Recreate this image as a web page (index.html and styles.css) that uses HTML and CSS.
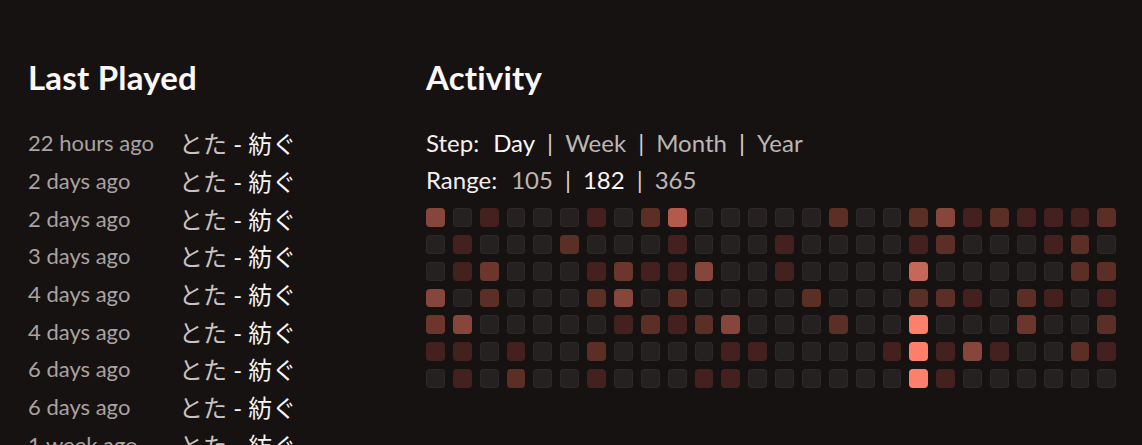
FILE: index.html
```html
<!DOCTYPE html>
<html lang="en">
<head>
<meta charset="utf-8">
<title>Stats</title>
<link rel="stylesheet" href="styles.css">
</head>
<body>
<main class="page">
  <section class="col-left">
    <h2 class="title">Last Played</h2>
    <ul class="plays">
      <li class="play"><span class="when">22 hours ago</span><span class="song"><span class="artist">とた</span> - 紡ぐ</span></li>
      <li class="play"><span class="when">2 days ago</span><span class="song"><span class="artist">とた</span> - 紡ぐ</span></li>
      <li class="play"><span class="when">2 days ago</span><span class="song"><span class="artist">とた</span> - 紡ぐ</span></li>
      <li class="play"><span class="when">3 days ago</span><span class="song"><span class="artist">とた</span> - 紡ぐ</span></li>
      <li class="play"><span class="when">4 days ago</span><span class="song"><span class="artist">とた</span> - 紡ぐ</span></li>
      <li class="play"><span class="when">4 days ago</span><span class="song"><span class="artist">とた</span> - 紡ぐ</span></li>
      <li class="play"><span class="when">6 days ago</span><span class="song"><span class="artist">とた</span> - 紡ぐ</span></li>
      <li class="play"><span class="when">6 days ago</span><span class="song"><span class="artist">とた</span> - 紡ぐ</span></li>
      <li class="play"><span class="when">1 week ago</span><span class="song"><span class="artist">とた</span> - 紡ぐ</span></li>
    </ul>
  </section>
  <section class="col-right">
    <h2 class="title">Activity</h2>
    <div class="opts">
      <div class="opt-row"><span class="opt-label">Step:</span><span class="opt on">Day</span><span class="sep">|</span><span class="opt">Week</span><span class="sep">|</span><span class="opt">Month</span><span class="sep">|</span><span class="opt">Year</span></div>
      <div class="opt-row"><span class="opt-label">Range:</span><span class="opt">105</span><span class="sep">|</span><span class="opt on">182</span><span class="sep">|</span><span class="opt">365</span></div>
    </div>
    <div class="heat">
      <!-- row 0 -->
      <i class="c l4"></i><i class="c"></i><i class="c l1"></i><i class="c"></i><i class="c"></i><i class="c"></i><i class="c l1"></i><i class="c"></i><i class="c l2"></i><i class="c l5"></i><i class="c"></i><i class="c"></i><i class="c"></i>
      <i class="c"></i><i class="c"></i><i class="c l2"></i><i class="c"></i><i class="c"></i><i class="c l2"></i><i class="c l4"></i><i class="c l1"></i><i class="c l2"></i><i class="c l1"></i><i class="c l1"></i><i class="c l1"></i><i class="c l2"></i>
      <!-- row 1 -->
      <i class="c"></i><i class="c l1"></i><i class="c"></i><i class="c"></i><i class="c"></i><i class="c l2"></i><i class="c"></i><i class="c"></i><i class="c"></i><i class="c l1"></i><i class="c"></i><i class="c"></i><i class="c"></i>
      <i class="c l1"></i><i class="c"></i><i class="c"></i><i class="c"></i><i class="c"></i><i class="c l1"></i><i class="c l2"></i><i class="c"></i><i class="c"></i><i class="c"></i><i class="c l1"></i><i class="c l2"></i><i class="c"></i>
      <!-- row 2 -->
      <i class="c"></i><i class="c l1"></i><i class="c l3"></i><i class="c"></i><i class="c"></i><i class="c"></i><i class="c l1"></i><i class="c l3"></i><i class="c l1"></i><i class="c l1"></i><i class="c l4"></i><i class="c"></i><i class="c"></i>
      <i class="c l1"></i><i class="c"></i><i class="c"></i><i class="c"></i><i class="c"></i><i class="c l5b"></i><i class="c"></i><i class="c"></i><i class="c"></i><i class="c"></i><i class="c"></i><i class="c l2"></i><i class="c l2"></i>
      <!-- row 3 -->
      <i class="c l4"></i><i class="c"></i><i class="c l2"></i><i class="c"></i><i class="c"></i><i class="c"></i><i class="c l2"></i><i class="c l4"></i><i class="c"></i><i class="c l2"></i><i class="c"></i><i class="c"></i><i class="c"></i>
      <i class="c"></i><i class="c l2"></i><i class="c"></i><i class="c"></i><i class="c"></i><i class="c l2"></i><i class="c l2"></i><i class="c l1"></i><i class="c"></i><i class="c l2"></i><i class="c l1"></i><i class="c"></i><i class="c l1"></i>
      <!-- row 4 -->
      <i class="c l3"></i><i class="c l4"></i><i class="c"></i><i class="c"></i><i class="c"></i><i class="c"></i><i class="c"></i><i class="c l1"></i><i class="c l2"></i><i class="c l1"></i><i class="c l2"></i><i class="c l4"></i><i class="c"></i>
      <i class="c"></i><i class="c"></i><i class="c l2"></i><i class="c"></i><i class="c"></i><i class="c l6"></i><i class="c"></i><i class="c"></i><i class="c"></i><i class="c l3"></i><i class="c"></i><i class="c"></i><i class="c l2"></i>
      <!-- row 5 -->
      <i class="c l1"></i><i class="c l1"></i><i class="c"></i><i class="c l1"></i><i class="c"></i><i class="c"></i><i class="c l2"></i><i class="c"></i><i class="c"></i><i class="c"></i><i class="c"></i><i class="c l1"></i><i class="c l1"></i>
      <i class="c"></i><i class="c"></i><i class="c"></i><i class="c"></i><i class="c l1"></i><i class="c l6"></i><i class="c l1"></i><i class="c l4"></i><i class="c l1"></i><i class="c"></i><i class="c"></i><i class="c l2"></i><i class="c l1"></i>
      <!-- row 6 -->
      <i class="c"></i><i class="c l1"></i><i class="c"></i><i class="c l2"></i><i class="c"></i><i class="c"></i><i class="c l1"></i><i class="c"></i><i class="c"></i><i class="c"></i><i class="c l1"></i><i class="c l1"></i><i class="c"></i>
      <i class="c"></i><i class="c"></i><i class="c"></i><i class="c"></i><i class="c"></i><i class="c l6"></i><i class="c l1"></i><i class="c"></i><i class="c"></i><i class="c"></i><i class="c"></i><i class="c"></i><i class="c"></i>
    </div>
  </section>
</main>
</body>
</html>
```
FILE: styles.css
```css
* { box-sizing: border-box; }
html, body {
  margin: 0;
  height: 100%;
  overflow: hidden;
}
body {
  background: #161212;
  color: #f4efee;
  font-family: Lato, "Noto Sans CJK JP", sans-serif;
}
.page {
  display: flex;
  padding: 58px 26px 0 28px;
}
.col-left {
  flex: 0 0 398px;
}
.col-right {
  flex: 1 1 auto;
  min-width: 0;
}
.title {
  margin: 0 0 28px;
  font-size: 33px;
  font-weight: 700;
  line-height: 38px;
  letter-spacing: 0.2px;
  color: #fbf8f7;
}
.plays {
  list-style: none;
  margin: 0;
  padding: 0;
}
.play {
  display: flex;
  align-items: center;
  height: 37.7px;
  font-size: 22px;
}
.when {
  flex: 0 0 151px;
  color: #aaa3a1;
}
.song {
  color: #f8f4f3;
  font-size: 24px;
  white-space: nowrap;
}
.artist {
  color: #c9c3c1;
}
.opts {
  display: flex;
  flex-direction: column;
  margin-bottom: 10px;
}
.opt-row {
  display: flex;
  align-items: center;
  height: 37px;
  font-size: 24px;
  color: #f4efee;
}
.opt-label {
  margin-right: 14px;
}
.opt {
  color: #bdb6b4;
}
.opt.on {
  color: #fbf8f7;
}
.sep {
  margin: 0 12px;
  color: #d9d3d1;
}
.heat {
  display: grid;
  grid-template-columns: repeat(26, 1fr);
  gap: 8px;
  width: 690px;
}
.c {
  display: block;
  aspect-ratio: 1 / 1;
  border-radius: 4px;
  background: #252120;
  box-shadow: inset 0 0 0 1px #2e2928;
}
.c.l1 { background: #44211f; box-shadow: none; }
.c.l2 { background: #5b2e26; box-shadow: none; }
.c.l3 { background: #6d362d; box-shadow: none; }
.c.l4 { background: #87463b; box-shadow: none; }
.c.l5 { background: #b35a4d; box-shadow: none; }
.c.l5b { background: #c4695a; box-shadow: none; }
.c.l6 { background: #fe806b; box-shadow: none; }
```
